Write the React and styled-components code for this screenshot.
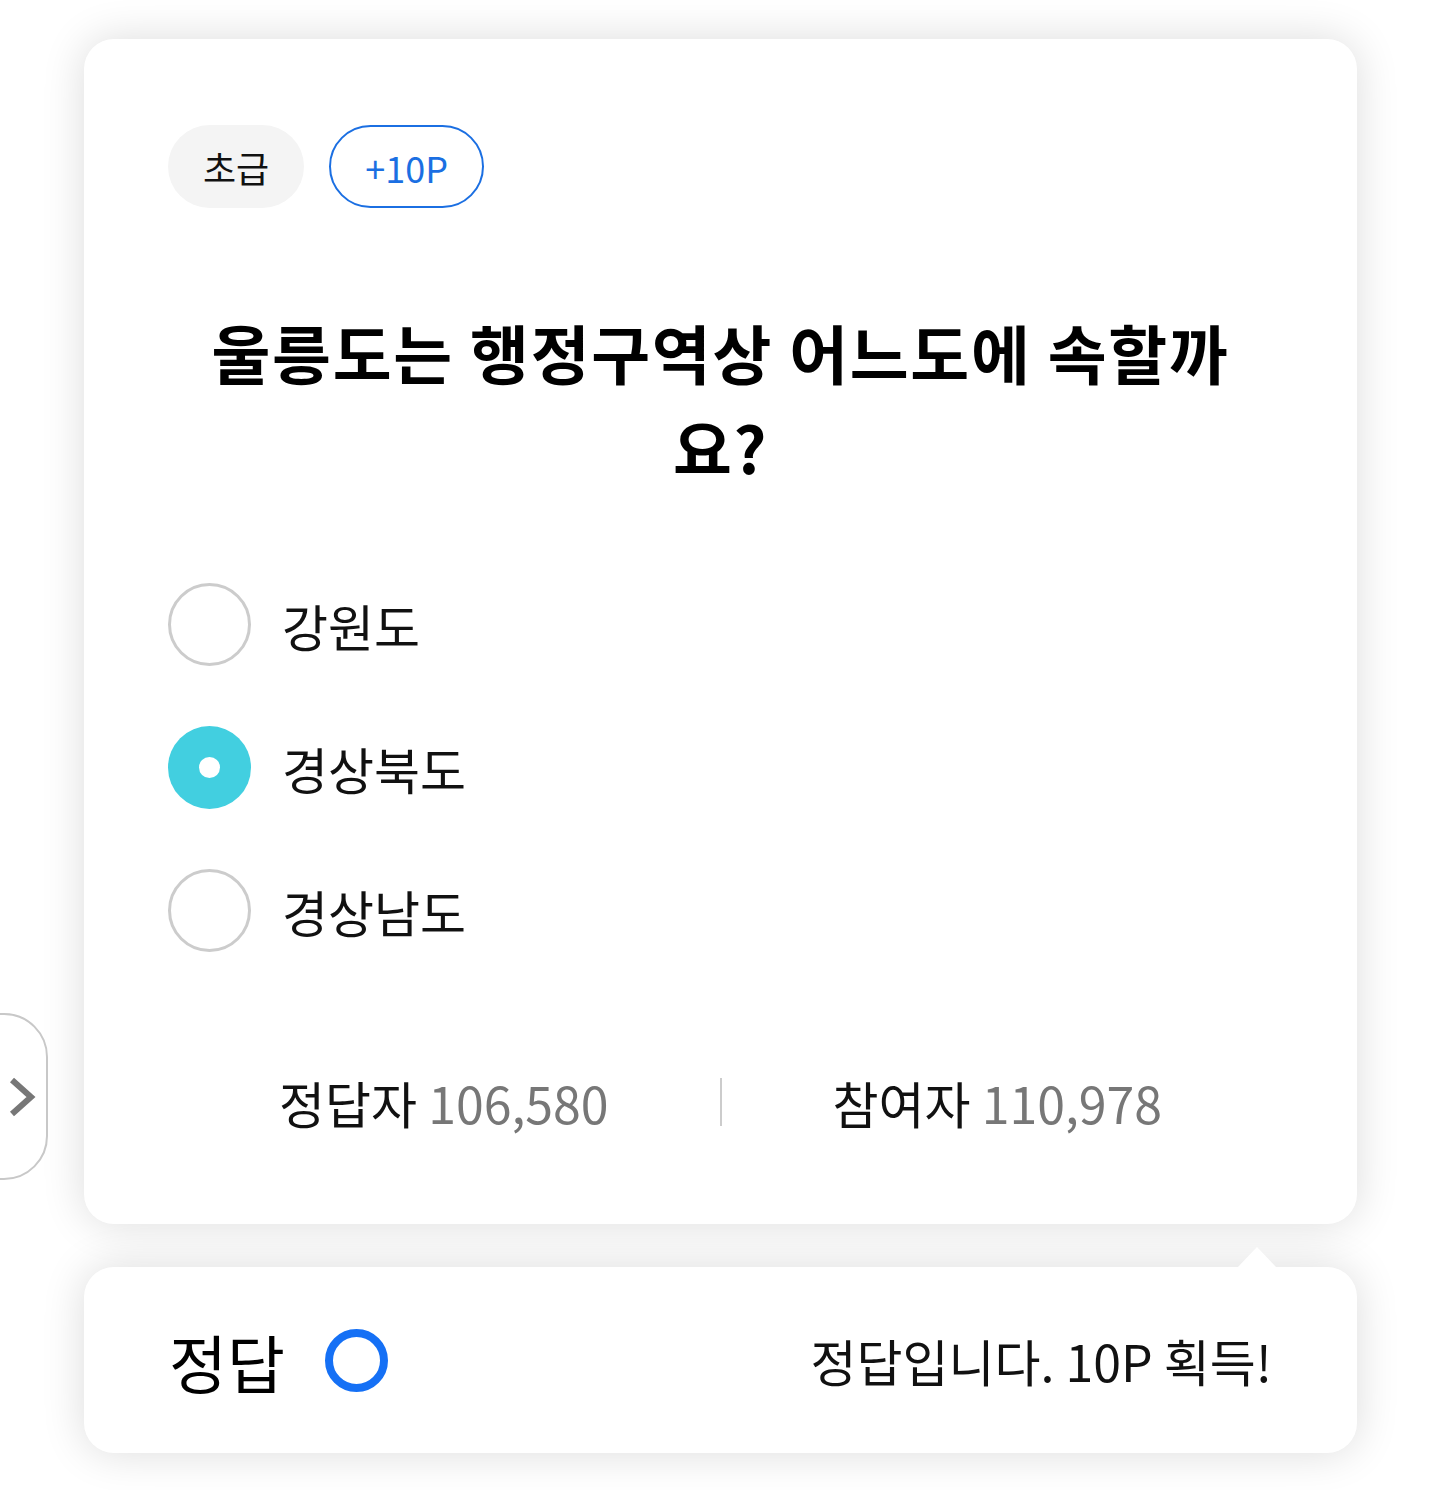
import React from 'react';
import styled, { createGlobalStyle } from 'styled-components';

const GlobalStyle = createGlobalStyle`
  html, body {
    margin: 0;
    padding: 0;
    background: #ffffff;
    font-family: "Noto Sans CJK KR", "Noto Sans", sans-serif;
    color: #111;
  }
  * { box-sizing: border-box; }
`;

const Page = styled.div`
  position: relative;
  width: 1440px;
  min-height: 1490px;
  padding: 39px 83px 38px 84px;
  display: flex;
  flex-direction: column;
  gap: 43px;
`;

const Card = styled.section`
  position: relative;
  background: #fff;
  border-radius: 30px;
  box-shadow: 0 0 44px rgba(0, 0, 0, 0.14);
`;

const QuizCard = styled(Card)`
  padding: 86px 84px 92px 84px;
  display: flex;
  flex-direction: column;
`;

const BadgeRow = styled.div`
  display: flex;
  gap: 25px;
`;

const Badge = styled.span`
  display: inline-flex;
  align-items: center;
  justify-content: center;
  height: 83px;
  padding: 0 ${p => (p.$outline ? '34px' : '35px')};
  border-radius: 42px;
  font-size: 36px;
  background: ${p => (p.$outline ? '#fff' : '#f4f4f4')};
  border: ${p => (p.$outline ? '2.5px solid #1b6fe2' : 'none')};
  color: ${p => (p.$outline ? '#1b6fe2' : '#111')};
`;

const Question = styled.h2`
  margin: 96px auto 0;
  max-width: 1080px;
  text-align: center;
  font-size: 64px;
  font-weight: 700;
  line-height: 95px;
  letter-spacing: 1.7px;
  color: #000;
`;

const Options = styled.div`
  margin-top: 89px;
  display: flex;
  flex-direction: column;
  gap: 60px;
`;

const Option = styled.label`
  display: flex;
  align-items: center;
  gap: 31px;
  font-size: 50px;
  color: #111;
  height: 83px;
`;

const Radio = styled.span`
  width: 83px;
  height: 83px;
  border-radius: 50%;
  flex-shrink: 0;
  display: flex;
  align-items: center;
  justify-content: center;
  background: ${p => (p.$checked ? '#42cfe0' : '#fff')};
  border: ${p => (p.$checked ? 'none' : '3px solid #cccccc')};

  &::after {
    content: '';
    display: ${p => (p.$checked ? 'block' : 'none')};
    width: 21px;
    height: 21px;
    border-radius: 50%;
    background: #fff;
  }
`;

const Stats = styled.div`
  margin-top: 120px;
  display: grid;
  grid-template-columns: 1fr 2px 1fr;
  align-items: center;
`;

const Stat = styled.div`
  text-align: center;
  font-size: 50px;
  line-height: 60px;
  color: #111;

  span {
    color: #777;
  }
`;

const Divider = styled.div`
  width: 2px;
  height: 48px;
  background: #cccccc;
`;

const ResultCard = styled(Card)`
  height: 186px;
  padding: 0 85px 0 85px;
  display: flex;
  align-items: center;
  justify-content: space-between;

  &::before {
    content: '';
    position: absolute;
    top: -20px;
    right: 80px;
    width: 0;
    height: 0;
    border-left: 20px solid transparent;
    border-right: 20px solid transparent;
    border-bottom: 21px solid #fff;
  }
`;

const AnswerLabel = styled.div`
  display: flex;
  align-items: center;
  gap: 40px;
  font-size: 63px;
  font-weight: 400;
  color: #000;
`;

const Ring = styled.span`
  width: 63px;
  height: 63px;
  border-radius: 50%;
  border: 8px solid #1570f5;
`;

const ResultText = styled.div`
  font-size: 50px;
  color: #111;
`;

const SideTab = styled.button`
  position: absolute;
  left: -40px;
  top: 1013px;
  width: 88px;
  height: 167px;
  border: 2px solid #c8c8c8;
  border-radius: 0 44px 44px 0;
  background: #fff;
  padding: 0 0 0 46px;
  display: flex;
  align-items: center;
  cursor: pointer;
`;

const options = [
  { label: '강원도', checked: false },
  { label: '경상북도', checked: true },
  { label: '경상남도', checked: false },
];

export default function App() {
  return (
    <>
      <GlobalStyle />
      <Page>
        <QuizCard>
          <BadgeRow>
            <Badge>초급</Badge>
            <Badge $outline>+10P</Badge>
          </BadgeRow>
          <Question>울릉도는 행정구역상 어느도에 속할까요?</Question>
          <Options>
            {options.map(o => (
              <Option key={o.label}>
                <Radio $checked={o.checked} />
                {o.label}
              </Option>
            ))}
          </Options>
          <Stats>
            <Stat>정답자 <span>106,580</span></Stat>
            <Divider />
            <Stat>참여자 <span>110,978</span></Stat>
          </Stats>
        </QuizCard>
        <ResultCard>
          <AnswerLabel>
            정답
            <Ring />
          </AnswerLabel>
          <ResultText>정답입니다. 10P 획득!</ResultText>
        </ResultCard>
        <SideTab aria-label="다음">
          <svg width="30" height="44" viewBox="0 0 30 44" fill="none">
            <path d="M4 5 L23 22 L4 39" stroke="#777" strokeWidth="6" strokeLinejoin="miter" />
          </svg>
        </SideTab>
      </Page>
    </>
  );
}
